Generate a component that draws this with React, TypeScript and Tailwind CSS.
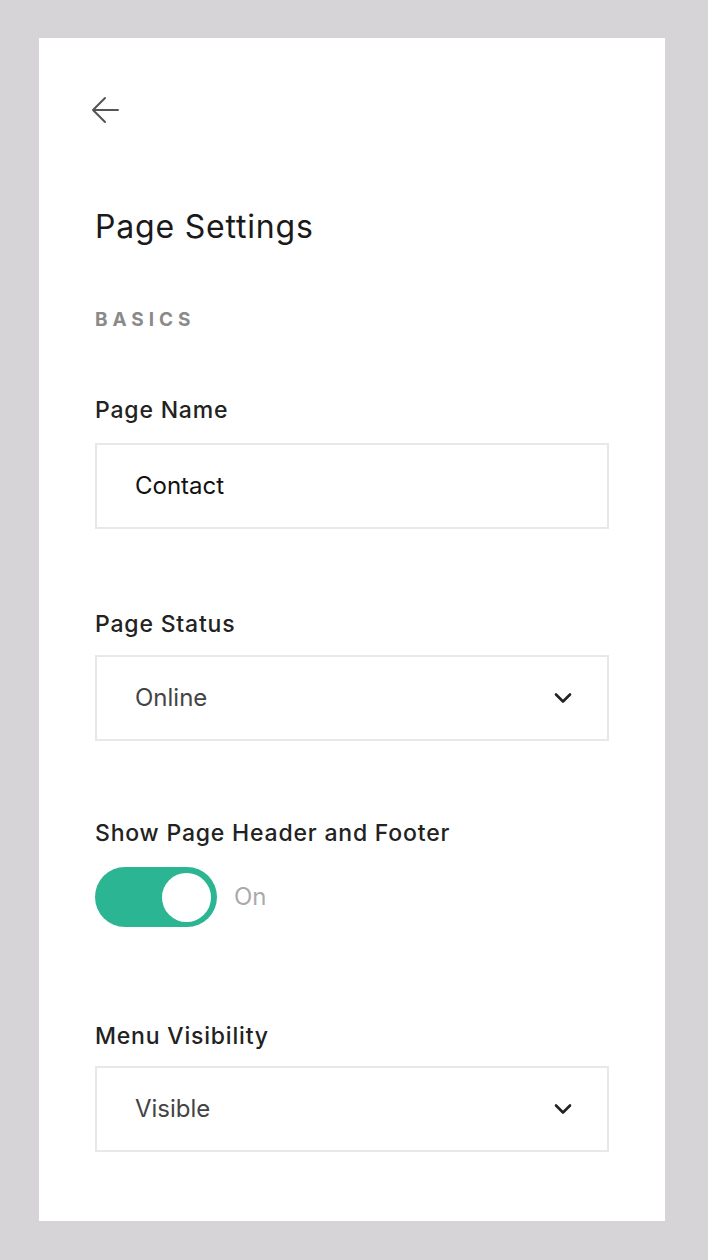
import React from "react";

function Chevron() {
  return (
    <svg width="18" height="12" viewBox="0 0 18 12" fill="none" className="shrink-0">
      <path d="M2 2.5 L9 9.5 L16 2.5" stroke="#222" strokeWidth="2.6" strokeLinecap="round" strokeLinejoin="round" />
    </svg>
  );
}

function Label({ children, mt }: { children: React.ReactNode; mt: string }) {
  return (
    <div className={`${mt} text-[23px] leading-[28px] font-medium tracking-[0.035em] text-[#222]`}>{children}</div>
  );
}

export default function App() {
  return (
    <div className="min-h-[1260px] w-[708px] bg-[#d6d4d7] pt-[38px]" style={{ fontFamily: "Inter, 'Open Sans', sans-serif" }}>
      <div className="ml-[39px] w-[626px] h-[1183px] bg-white px-[56px] pt-[58px]">
        <svg width="28" height="28" viewBox="0 0 28 28" fill="none" className="-ml-[4px] block">
          <path d="M27 14 H2 M14 2 L2 14 L14 26" stroke="#555" strokeWidth="2" strokeLinecap="round" strokeLinejoin="round" />
        </svg>
        <h1 className="mt-[83px] text-[32px] leading-[40px] font-normal tracking-[0.025em] text-[#1a1a1a]">Page Settings</h1>
        <div className="mt-[61px] text-[19px] leading-[24px] font-bold tracking-[0.26em] text-[#8a8a8a]">BASICS</div>

        <Label mt="mt-[64px]">Page Name</Label>
        <div className="mt-[19px] flex h-[86px] items-center border-2 border-[#e8e8e8] pl-[38px] text-[24px] text-[#111]">
          Contact
        </div>

        <Label mt="mt-[81px]">Page Status</Label>
        <div className="mt-[17px] flex h-[86px] items-center justify-between border-2 border-[#e8e8e8] pl-[38px] pr-[35px] text-[24px] text-[#444]">
          <span>Online</span>
          <Chevron />
        </div>

        <Label mt="mt-[78px]">Show Page Header and Footer</Label>
        <div className="mt-[20px] flex items-center gap-[17px]">
          <div className="flex h-[60px] w-[122px] items-center justify-end rounded-full bg-[#2bb592] pr-[6px]">
            <div className="h-[49px] w-[49px] rounded-full bg-white" />
          </div>
          <span className="text-[24px] text-[#aaa]">On</span>
        </div>

        <Label mt="mt-[95px]">Menu Visibility</Label>
        <div className="mt-[16px] flex h-[86px] items-center justify-between border-2 border-[#e8e8e8] pl-[38px] pr-[35px] text-[24px] text-[#444]">
          <span>Visible</span>
          <Chevron />
        </div>
      </div>
    </div>
  );
}
